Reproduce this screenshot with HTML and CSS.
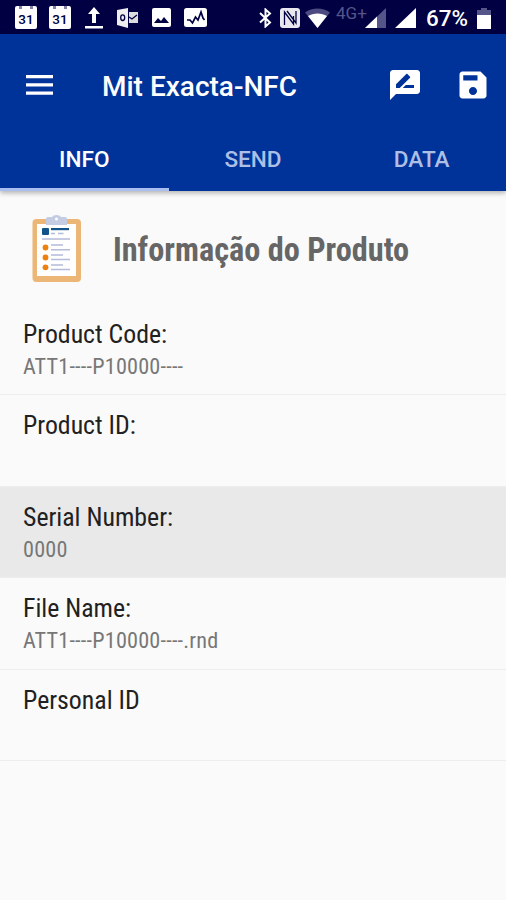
FILE: index.html
```html
<!DOCTYPE html>
<html lang="pt">
<head>
  <meta charset="UTF-8" />
  <meta name="viewport" content="width=device-width, initial-scale=1.0" />
  <title>Mit Exacta-NFC</title>
  <link rel="stylesheet" href="styles.css">
</head>
<body>
  <div class="status-bar">
    <div class="status-left">
      <div class="calendar">31</div>
      <div class="calendar">31</div>
      <svg class="upload" width="18" height="22" viewBox="0 0 18 22"><path d="M9 0l6 7h-4v9H7V7H3zM0 19h18v2.500H0z" fill="#fff"/></svg>
      <svg class="mail" width="21" height="20" viewBox="0 0 21 20">
        <path d="M0 2l11-2v20L0 17z" fill="#eee"/>
        <path d="M12 4h9v11h-9z" fill="#ddd"/>
        <path d="M12 9l3 2 5-4" fill="none" stroke="#000042" stroke-width="1.300"/>
        <ellipse cx="5.700" cy="9.700" rx="2" ry="2.800" fill="none" stroke="#000042" stroke-width="1.300"/>
      </svg>
      <svg class="photo" width="19" height="19" viewBox="0 0 19 19"><rect width="19" height="19" rx="2" fill="#fff"/><path d="M2 15l4-5 3 3 3-4 5 6z" fill="#000042"/></svg>
      <svg class="activity" width="23" height="19" viewBox="0 0 23 19"><rect width="23" height="19" rx="2.500" fill="#fff"/><path d="M3 12h3l2.500 3 3-6 2.500 3 3-8 2 6 1.500 2" fill="none" stroke="#000042" stroke-width="1.700"/></svg>
    </div>
    <div class="status-right">
      <svg class="bluetooth" width="13" height="20" viewBox="0 0 13 20"><path d="M1 5l10 9.500-4.500 4V1.500L11 5.500 1 14.500" fill="none" stroke="#fff" stroke-width="2"/></svg>
      <svg class="nfc" width="20" height="20" viewBox="0 0 20 20">
        <rect width="20" height="20" rx="3" fill="#e8e8ee"/>
        <path d="M4.500 17V4l9 12V8M7 3l9 12V3" fill="none" stroke="#000042" stroke-width="1.300"/>
      </svg>
      <svg class="wifi" width="25" height="20" viewBox="0 0 25 20"><path d="M0 4.500C7-1 18-1 25 4.500L12.500 20z" fill="#4c4a80"/><path d="M3 8c5.500-3.500 13.500-3.500 19 0L12.500 20z" fill="#fff"/></svg>
      <span class="network">4G+</span>
      <svg class="signal-low" width="21" height="20" viewBox="0 0 21 20"><path d="M0 20L21 0v20z" fill="#56558a"/><path d="M0 20L12 8.500V20z" fill="#fff"/></svg>
      <svg class="signal" width="21" height="20" viewBox="0 0 21 20"><path d="M0 20L21 0v20z" fill="#fff"/></svg>
      <span class="percent">67%</span>
      <svg class="battery" width="14" height="21" viewBox="0 0 14 21"><path d="M4 0h6v2h4v6H0V2h4z" fill="#56558a"/><path d="M0 7h14v14H0z" fill="#fff"/></svg>
    </div>
  </div>

  <header class="app-bar">
    <div class="toolbar">
      <svg class="menu" width="27" height="20" viewBox="0 0 27 20"><path d="M0 0h27v3.200H0zM0 8.300h27v3.200H0zM0 16.600h27v3.200H0z" fill="#fff"/></svg>
      <h1>Mit Exacta-NFC</h1>
      <svg class="review" width="36" height="36" viewBox="0 0 24 24"><path d="M20 2H4c-1.100 0-1.990.900-1.990 2L2 22l4-4h14c1.100 0 2-.900 2-2V4c0-1.100-.900-2-2-2zM6 14v-2.470l6.880-6.880c.200-.200.510-.200.710 0l1.770 1.770c.200.200.200.510 0 .710L8.470 14H6zm12 0h-7.500l2-2H18v2z" fill="#fff"/></svg>
      <svg class="save" width="36" height="36" viewBox="0 0 24 24"><path d="M17 3H5c-1.110 0-2 .900-2 2v14c0 1.100.890 2 2 2h14c1.100 0 2-.900 2-2V7l-4-4zm-5 15.700c-1.500 0-2.700-1.200-2.700-2.700s1.200-2.700 2.700-2.700 2.700 1.200 2.700 2.700-1.200 2.700-2.700 2.700zm3-9.700H5.500V5.500h9.500v3.500z" fill="#fff"/></svg>
    </div>
    <nav class="tabs">
      <div class="tab active">INFO</div>
      <div class="tab">SEND</div>
      <div class="tab">DATA</div>
    </nav>
  </header>

  <main>
    <div class="section-title">
      <svg class="clipboard" width="50" height="68" viewBox="0 0 50 68">
        <rect x="0.500" y="4" width="48.500" height="63" rx="4" fill="#ebb676"/>
        <path d="M5 9h39v52H5z" fill="#fff"/>
        <path d="M14 4q0-2 2-2h4q1-2 4.500-2T29 2h4q2 0 2 2v6H14z" fill="#c3cce3"/>
        <circle cx="24.500" cy="4" r="1.500" fill="#fff"/>
        <rect x="10" y="13" width="7" height="7" rx="1" fill="#12548a"/>
        <path d="M19 13h18v2.200H19z" fill="#12548a"/>
        <path d="M19 18.500h4M26 18.500h5.500M10 24h28M19 30h12M19 34.700h19M19 40h12M19 44.500h19M19 50h12M19 54.500h19" stroke="#b5bbd8" stroke-width="1.500"/>
        <circle cx="13.500" cy="32.500" r="2.900" fill="#ec8110"/>
        <circle cx="13.500" cy="42.500" r="2.900" fill="#ec8110"/>
        <circle cx="13.500" cy="52.300" r="2.900" fill="#ec8110"/>
      </svg>
      <h2>Informação do Produto</h2>
    </div>

    <ul class="list">
      <li><span class="label">Product Code:</span><span class="value">ATT1----P10000----</span></li>
      <li><span class="label">Product ID:</span></li>
      <li class="selected"><span class="label">Serial Number:</span><span class="value">0000</span></li>
      <li><span class="label">File Name:</span><span class="value">ATT1----P10000----.rnd</span></li>
      <li><span class="label">Personal ID</span></li>
    </ul>
  </main>
</body>
</html>
```
FILE: styles.css
```css
* {
  box-sizing: border-box;
}

body {
  margin: 0;
  height: 900px;
  overflow: hidden;
  font-family: Roboto, sans-serif;
  background: #fafafa;
  color: #212121;
}

svg {
  display: block;
  flex: none;
}

h1, h2, ul {
  margin: 0;
  padding: 0;
}

.status-bar {
  height: 34px;
  display: flex;
  justify-content: space-between;
  background: #000042;
  color: #fff;
}

.status-left, .status-right {
  display: flex;
  align-items: flex-start;
}

.status-left {
  padding: 6px 0 0 15px;
}

.calendar {
  width: 22px;
  height: 23px;
  margin-right: 12px;
  padding-top: 4px;
  border-radius: 2px;
  /* two binder rings along the top edge */
  background:
    linear-gradient(#8583a8, #8583a8) 4px 0 / 3px 3px no-repeat,
    linear-gradient(#8583a8, #8583a8) 15px 0 / 3px 3px no-repeat,
    #fff;
  color: #000042;
  font-size: 13.5px;
  font-weight: 500;
  line-height: 19px;
  text-align: center;
}

.upload {
  margin: 1px 0 0 2px;
}

.mail {
  margin: 2px 0 0 14px;
}

.photo {
  margin: 2px 0 0 14px;
}

.activity {
  margin: 2px 0 0 13px;
}

.status-right {
  padding: 8px 15px 0 0;
}

.nfc {
  margin-left: 8px;
}

.wifi {
  margin-left: 5px;
}

.network {
  margin: -4px 0 0 6px;
  width: 29px;
  color: #56558a;
  font-size: 17px;
  line-height: 18px;
}

.signal {
  margin-left: 9px;
}

.percent {
  width: 41px;
  margin: -2px 0 0 10px;
  font-size: 22.4px;
  font-weight: 500;
  line-height: 24px;
}

.battery {
  margin-left: 10px;
}

.app-bar {
  height: 157px;
  background: #003399;
  color: #fff;
  box-shadow: 0 2px 5px rgba(0, 0, 0, 0.3);
}

.toolbar {
  height: 100px;
  display: flex;
  align-items: center;
  padding: 2px 15px 0 26px;
}

.toolbar h1 {
  flex: 1;
  margin: 2px 0 0 49px;
  font-size: 28px;
  font-weight: 500;
}

.review {
  margin-right: 32px;
}

.tabs {
  display: flex;
  height: 57px;
}

.tab {
  flex: 1;
  padding-top: 12px;
  color: #adbfe5;
  font-size: 22.6px;
  font-weight: 500;
  line-height: 28px;
  text-align: center;
}

.tab.active {
  color: #fff;
  border-bottom: 3px solid #a9bdf0;
}

.section-title {
  height: 113px;
  display: flex;
  align-items: center;
  padding: 3px 0 0 32px;
}

.section-title h2 {
  margin: 2px 0 0 31px;
  color: #666;
  font-family: "Roboto Condensed", Roboto, sans-serif;
  font-stretch: 75%;
  font-size: 32.3px;
  font-weight: 700;
}

.list {
  list-style: none;
  font-family: "Roboto Condensed", Roboto, sans-serif;
  font-stretch: 75%;
}

.list li {
  height: 91.4px;
  padding: 14px 23px 0;
  border-bottom: 1px solid #ededed;
}

.list .selected {
  background: #e9e9e9;
}

.label, .value {
  display: block;
  line-height: 32px;
}

.label {
  font-size: 25.8px;
}

.value {
  color: #777;
  font-size: 22.2px;
  font-weight: 370;
  letter-spacing: 0.2px;
}
```
